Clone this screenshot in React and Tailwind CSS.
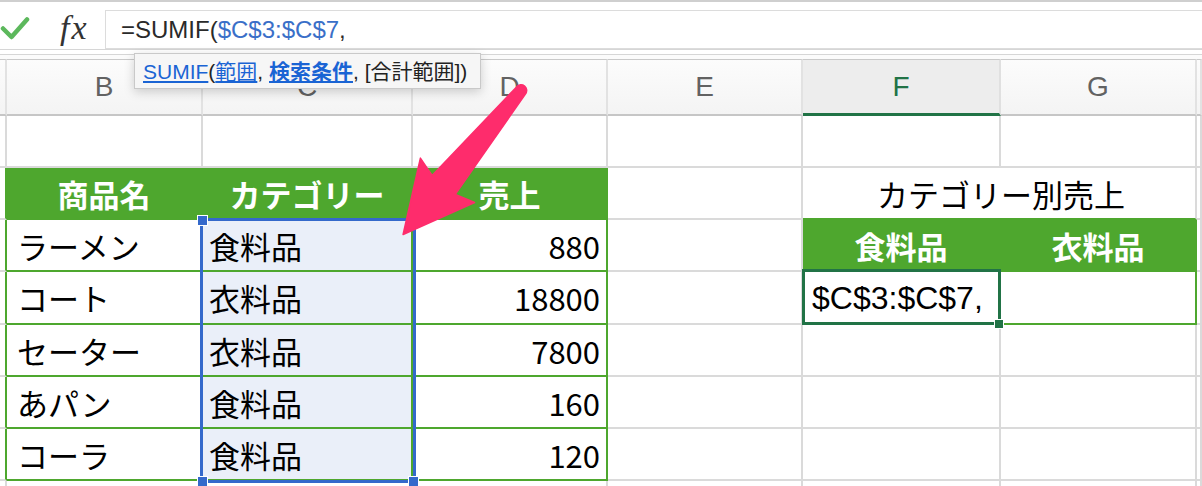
import React from "react";

const items = [
  ["ラーメン", "食料品", "880"],
  ["コート", "衣料品", "18800"],
  ["セーター", "衣料品", "7800"],
  ["あパン", "食料品", "160"],
  ["コーラ", "食料品", "120"],
];

const gray = "border-r-2 border-b-2 border-[#dadada]";
const green = "border-r-2 border-b-2 border-[#4ea72e]";

function Cell({ className = "", children }) {
  return <div className={"flex items-center min-w-0 " + className}>{children}</div>;
}

function Check() {
  return (
    <svg width="30" height="28" viewBox="0 0 30 28" className="mt-[8px]">
      <path d="M3 12.5 L11.5 21 L27 3.5" fill="none" stroke="#5cb85c" strokeWidth="4.5" strokeLinecap="round" strokeLinejoin="round" />
    </svg>
  );
}

function FormulaBar() {
  return (
    <div className="flex h-[50px] border-t-2 border-b border-t-[#cfcfcf] border-b-[#d6d6d6] bg-white">
      <div className="flex w-[105px] items-center">
        <Check />
        <span className="ml-[30px] mt-[4px] font-['Liberation_Serif',serif] text-[34px] italic leading-none tracking-[2px] text-[#333]">
          fx
        </span>
      </div>
      <div className="mt-[8px] flex flex-1 items-center border-l border-t border-b border-[#dcdcdc] bg-white pl-[15px] font-['Liberation_Sans','Noto_Sans_CJK_JP',sans-serif] text-[24px] leading-none text-[#2a2a2a]">
        =SUMIF(<span className="text-[#3a6fc8]">$C$3:$C$7</span>,
      </div>
    </div>
  );
}

function HeaderRow() {
  const letters = ["", "B", "C", "D", "E", "F", "G", ""];
  return letters.map((l, i) =>
    l === "F" ? (
      <Cell key={i} className="justify-center border-t border-r-2 border-b-[3px] border-t-[#c9c9c9] border-r-[#e0e0e0] border-b-[#217346] bg-[#ededed] text-[#217346]">
        {l}
      </Cell>
    ) : (
      <Cell key={i} className="justify-center border-t border-r-2 border-b-2 border-t-[#c9c9c9] border-r-[#e2e2e2] border-b-[#c6c6c6] bg-gradient-to-b from-[#fcfcfc] to-[#f4f4f4] text-[#626262]">
        {l}
      </Cell>
    )
  );
}

function FG(rowIndex) {
  if (rowIndex === 0)
    return [
      <Cell key="f" className="justify-center border-r-2 border-b-2 border-[#4ea72e] bg-[#4ea72e] font-bold text-white">食料品</Cell>,
      <Cell key="g" className={"justify-center bg-[#4ea72e] font-bold text-white " + green}>衣料品</Cell>,
    ];
  if (rowIndex === 1)
    return [
      <Cell key="f" className={"relative pl-[9px] " + gray}>
        <span className="font-['Liberation_Sans',sans-serif] text-[32px]">$C$3:$C$7,</span>
        <span className="absolute -left-[1px] -top-[3px] -right-[2px] -bottom-[2px] border-[3px] border-[#217346]" />
        <span className="absolute -right-[5px] -bottom-[6px] h-[10px] w-[10px] border border-white bg-[#217346]" />
      </Cell>,
      <Cell key="g" className={green} />,
    ];
  return [<Cell key="f" className={gray} />, <Cell key="g" className={gray} />];
}

function Sheet() {
  return (
    <div className="grid grid-cols-[7px_196px_210px_195px_195px_198px_196px_5px] grid-rows-[57px_52px_52px_52px_53px_52px_52px_52px_5px] font-['Noto_Sans_CJK_JP',sans-serif] text-[31px] leading-none text-black">
      <div className="contents font-['Liberation_Sans',sans-serif] text-[28px] font-light">
        <HeaderRow />
      </div>

      {/* row 1 */}
      {Array.from({ length: 8 }).map((_, i) => (
        <Cell key={"r1" + i} className={gray} />
      ))}

      {/* row 2 : table headers */}
      <Cell className="border-r-2 border-b-2 border-r-[#4ea72e] border-b-[#dadada]" />
      <Cell className={"justify-center bg-[#4ea72e] font-bold text-white " + green}>商品名</Cell>
      <Cell className={"justify-center bg-[#4ea72e] font-bold text-white " + green}>カテゴリー</Cell>
      <Cell className={"justify-center bg-[#4ea72e] font-bold text-white " + green}>売上</Cell>
      <Cell className={gray} />
      <Cell className="col-span-2 justify-center border-r-2 border-b-2 border-r-[#dadada] border-b-[#4ea72e] pl-[4px]">
        カテゴリー別売上
      </Cell>
      <Cell className={gray} />

      {items.map((it, r) => (
        <React.Fragment key={r}>
          <Cell className="border-r-2 border-b-2 border-r-[#4ea72e] border-b-[#dadada]" />
          <Cell className={"pl-[10px] " + green}>{it[0]}</Cell>
          <Cell className={"bg-[#eaeff9] pl-[6px] " + green}>{it[1]}</Cell>
          <Cell className={"justify-end pr-[6px] " + green}>{it[2]}</Cell>
          <Cell className={gray} />
          {FG(r)}
          <Cell className={gray} />
        </React.Fragment>
      ))}

      {Array.from({ length: 8 }).map((_, i) => (
        <Cell key={"r9" + i} className="border-r-2 border-[#dadada]" />
      ))}
    </div>
  );
}

function Tooltip() {
  return (
    <div className="absolute left-[134px] top-[53px] flex h-[36px] w-[347px] items-center border border-[#c9c9c9] bg-[#f6f6f6] pl-[8px] font-['Liberation_Sans','Noto_Sans_CJK_JP',sans-serif] text-[21px] leading-none text-[#222] shadow-[0_3px_10px_rgba(0,0,0,0.18)]">
      <span className="text-[#1a64d4] underline underline-offset-2">SUMIF</span>(
      <span className="text-[#1a64d4] underline underline-offset-2">範囲</span>,&nbsp;
      <span className="font-bold text-[#1a64d4] underline underline-offset-2">検索条件</span>, [合計範囲])
    </div>
  );
}

function Selection() {
  return (
    <>
      <div className="absolute left-[200px] top-[218px] h-[265px] w-[216px] border-[3px] border-[#3469cb]" />
      <div className="absolute left-[197px] top-[215px] h-[11px] w-[11px] border border-white bg-[#3469cb]" />
      <div className="absolute left-[197px] top-[476px] h-[11px] w-[11px] border border-white bg-[#3469cb]" />
      <div className="absolute left-[408px] top-[476px] h-[11px] w-[11px] border border-white bg-[#3469cb]" />
    </>
  );
}

function Arrow() {
  return (
    <svg className="pointer-events-none absolute left-0 top-0" width="1202" height="486" viewBox="0 0 1202 486">
      <path
        d="M516.6 86.9 L432.1 175.4 L420.4 158.1 L403.1 234.5 L474.6 202.5 L455.3 194.4 L525.4 94.1 A5.6 5.6 0 0 0 516.6 86.9 Z"
        fill="#fe2c6c"
        stroke="#fe2c6c"
        strokeWidth="1.5"
        strokeLinejoin="round"
      />
    </svg>
  );
}

export default function App() {
  return (
    <div className="relative h-[486px] w-[1202px] overflow-hidden bg-white">
      <FormulaBar />
      <div className="h-[4px] bg-white" />
      <div className="h-[1px] bg-[#d6d6d6]" />
      <div className="h-[4px] bg-[#fbfbfb]" />
      <Sheet />
      <Selection />
      <Tooltip />
      <Arrow />
    </div>
  );
}
